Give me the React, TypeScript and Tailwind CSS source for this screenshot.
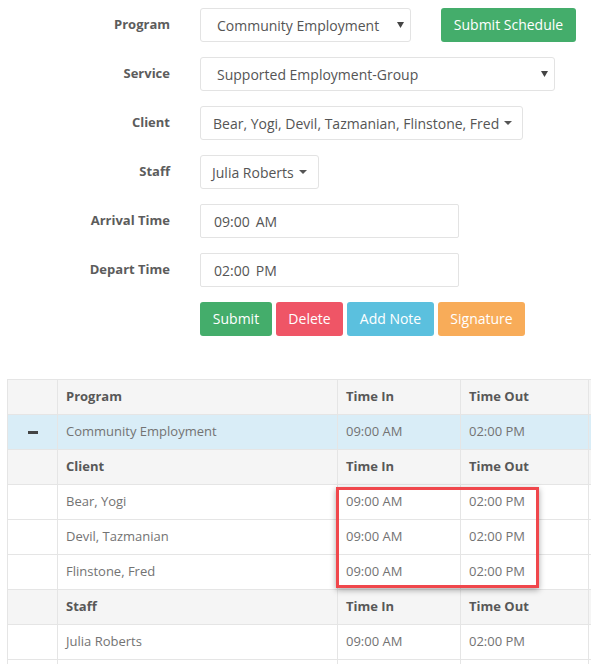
import React from "react";

const Caret = () => (
  <span className="inline-block ml-[5px] w-0 h-0 border-l-[4px] border-r-[4px] border-t-[4px] border-l-transparent border-r-transparent border-t-[#555] align-middle" />
);

const SelectArrow = () => (
  <svg width="7" height="6" viewBox="0 0 7 6" className="shrink-0">
    <path d="M0 0 L7 0 L3.5 6 Z" fill="#444" />
  </svg>
);

const Label = ({ children }: { children: React.ReactNode }) => (
  <div className="h-[34px] flex items-center justify-end font-bold text-[13px] text-[#5c5c5c]">{children}</div>
);

const TimeInput = ({ h, p }: { h: string; p: string }) => (
  <div className="w-[259px] h-[34px] border border-[#e3e3e3] rounded-[2px] flex items-center pl-[13px] text-[14px] text-[#555]">
    <span>{h}</span>
    <span className="ml-[6px]">{p}</span>
  </div>
);

const Btn = ({ children, cls }: { children: React.ReactNode; cls: string }) => (
  <button className={`h-[34px] px-[10px] rounded-[3px] text-white text-[14px] leading-none ${cls}`}>{children}</button>
);

type Row = { kind: "head" | "prog" | "sub" | "data" | "empty"; a: string; b: string; c: string };

const rows: Row[] = [
  { kind: "head", a: "Program", b: "Time In", c: "Time Out" },
  { kind: "prog", a: "Community Employment", b: "09:00 AM", c: "02:00 PM" },
  { kind: "sub", a: "Client", b: "Time In", c: "Time Out" },
  { kind: "data", a: "Bear, Yogi", b: "09:00 AM", c: "02:00 PM" },
  { kind: "data", a: "Devil, Tazmanian", b: "09:00 AM", c: "02:00 PM" },
  { kind: "data", a: "Flinstone, Fred", b: "09:00 AM", c: "02:00 PM" },
  { kind: "sub", a: "Staff", b: "Time In", c: "Time Out" },
  { kind: "data", a: "Julia Roberts", b: "09:00 AM", c: "02:00 PM" },
  { kind: "empty", a: "", b: "", c: "" },
];

export default function App() {
  return (
    <div className="font-['Open_Sans',sans-serif] w-[591px] h-[664px] overflow-hidden bg-white">
      <div className="pt-[8px] grid grid-cols-[170px_1fr] gap-x-[30px] gap-y-[15px]">
        <Label>Program</Label>
        <div className="flex items-center">
          <div className="w-[211px] h-[34px] border border-[#e3e3e3] rounded-[3px] flex items-center justify-between pl-[16px] pr-[6px] text-[14px] text-[#555]">
            <span>Community Employment</span>
            <SelectArrow />
          </div>
          <Btn cls="ml-[30px] w-[135px] bg-[#44ad6b]">Submit Schedule</Btn>
        </div>

        <Label>Service</Label>
        <div className="w-[355px] h-[34px] border border-[#e3e3e3] rounded-[3px] flex items-center justify-between pl-[16px] pr-[6px] text-[14px] text-[#555]">
          <span>Supported Employment-Group</span>
          <SelectArrow />
        </div>

        <Label>Client</Label>
        <div>
          <div className="inline-flex w-[323px] h-[34px] border border-[#e3e3e3] rounded-[3px] items-center pl-[12px] text-[14px] text-[#555]">
            <span>Bear, Yogi, Devil, Tazmanian, Flinstone, Fred</span>
            <Caret />
          </div>
        </div>

        <Label>Staff</Label>
        <div>
          <div className="inline-flex w-[119px] h-[34px] border border-[#e3e3e3] rounded-[3px] items-center pl-[11px] text-[14px] text-[#555]">
            <span>Julia Roberts</span>
            <Caret />
          </div>
        </div>

        <Label>Arrival Time</Label>
        <TimeInput h="09:00" p="AM" />

        <Label>Depart Time</Label>
        <TimeInput h="02:00" p="PM" />

        <div />
        <div className="flex gap-[4px]">
          <Btn cls="w-[72px] bg-[#44ad6b]">Submit</Btn>
          <Btn cls="w-[67px] bg-[#ef5566]">Delete</Btn>
          <Btn cls="w-[87px] bg-[#5bc0de]">Add Note</Btn>
          <Btn cls="w-[87px] bg-[#f8ac59]">Signature</Btn>
        </div>
      </div>

      <div className="relative mt-[43px] ml-[7px] w-[700px]">
        <table className="table-fixed border-collapse w-[700px] text-[13px]">
          <colgroup>
            <col className="w-[50px]" />
            <col className="w-[280px]" />
            <col className="w-[123px]" />
            <col className="w-[128px]" />
            <col />
          </colgroup>
          <tbody>
            {rows.map((r, i) => {
              const bold = r.kind === "head" || r.kind === "sub";
              const rowBg =
                r.kind === "head" || r.kind === "sub"
                  ? "bg-[#f5f5f5]"
                  : r.kind === "prog"
                  ? "bg-[#d9edf7]"
                  : "bg-white";
              const txt = bold ? "font-bold text-[#585858]" : "text-[#737373]";
              const cell = `h-[35px] px-[8px] border border-[#e5e5e5] text-left align-middle ${txt}`;
              return (
                <tr key={i} className={rowBg}>
                  <td className={`h-[35px] border border-[#e5e5e5] text-center ${rowBg}`}>
                    {r.kind === "prog" && (
                      <span className="inline-block w-[10px] h-[3px] bg-[#444] align-middle" />
                    )}
                  </td>
                  <td className={cell}>{r.a}</td>
                  <td className={cell}>{r.b}</td>
                  <td className={cell}>{r.c}</td>
                  <td className={cell}></td>
                </tr>
              );
            })}
          </tbody>
        </table>
        <div className="absolute left-[329px] top-[108px] w-[203px] h-[101px] border-[3px] border-[#f0474c] shadow-[0_2px_6px_rgba(0,0,0,0.35)] pointer-events-none" />
      </div>
    </div>
  );
}
